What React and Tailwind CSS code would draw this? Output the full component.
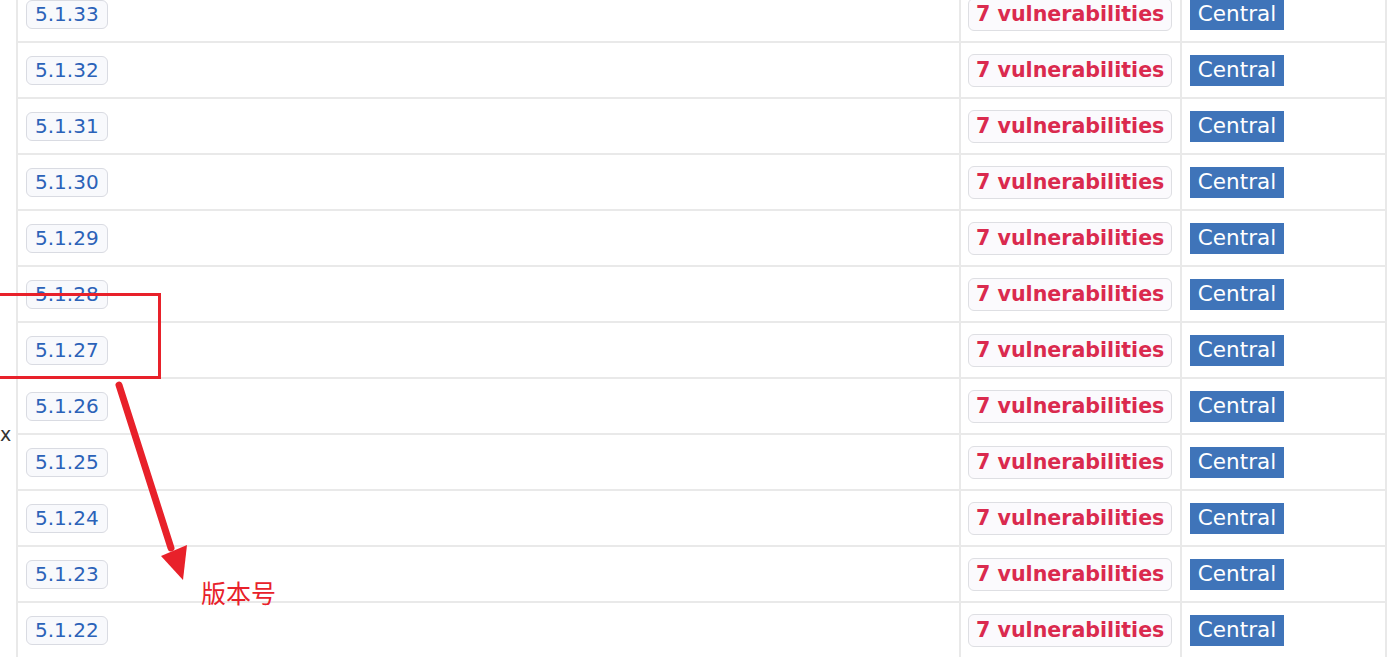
import React from "react";

const versions = [
  "5.1.33",
  "5.1.32",
  "5.1.31",
  "5.1.30",
  "5.1.29",
  "5.1.28",
  "5.1.27",
  "5.1.26",
  "5.1.25",
  "5.1.24",
  "5.1.23",
  "5.1.22",
];

const Ligne = ({ version }) => (
  <div className="flex h-[56px] border-b-2 border-[#e9e9e9]">
    <div className="flex flex-1 items-center pl-[8px]">
      <span className="rounded-[6px] border border-[#d9dbe2] bg-[#f8f9fc] px-[8px] h-[29px] flex items-center text-[20px] leading-none text-[#2b62b8]">
        {version}
      </span>
    </div>
    <div className="flex w-[221px] items-center border-l-2 border-[#e9e9e9] pl-[7px]">
      <span className="rounded-[6px] border border-[#dedfe3] bg-[#fbfafd] px-[7px] h-[33px] flex items-center text-[20.6px] leading-none font-bold text-[#da2a4e]">
        7 vulnerabilities
      </span>
    </div>
    <div className="flex w-[205px] items-center border-l-2 border-[#e9e9e9] pl-[8px]">
      <span className="bg-[#3f74b9] h-[31px] w-[94px] flex items-center justify-center text-[21.5px] leading-none text-white">
        Central
      </span>
    </div>
  </div>
);

export default function App() {
  return (
    <div
      className="relative h-[657px] w-[1388px] overflow-hidden bg-white"
      style={{ fontFamily: '"DejaVu Sans", Verdana, sans-serif' }}
    >
      <div className="flex">
        <div className="w-[16px] shrink-0 pt-[420px] pr-[6px] text-right text-[19px] text-[#333]">
          x
        </div>
        <div className="-mt-[13px] w-[1371px] border-l-2 border-r-2 border-[#e9e9e9]">
          {versions.map((v) => (
            <Ligne key={v} version={v} />
          ))}
        </div>
      </div>

      {/* annotation */}
      <div className="absolute left-[-10px] top-[293px] h-[86px] w-[171px] border-[3px] border-[#e8212a]" />
      <svg
        className="absolute left-0 top-0"
        width="1388"
        height="657"
        viewBox="0 0 1388 657"
      >
        <line
          x1="119"
          y1="385"
          x2="171"
          y2="548"
          stroke="#e8212a"
          strokeWidth="7"
          strokeLinecap="round"
        />
        <polygon points="161,556 187,545 183,580" fill="#e8212a" />
      </svg>
      <span
        className="absolute left-[201px] top-[580px] text-[25px] leading-none text-[#e8212a]"
        style={{ fontFamily: '"Noto Sans CJK SC", sans-serif' }}
      >
        版本号
      </span>
    </div>
  );
}
